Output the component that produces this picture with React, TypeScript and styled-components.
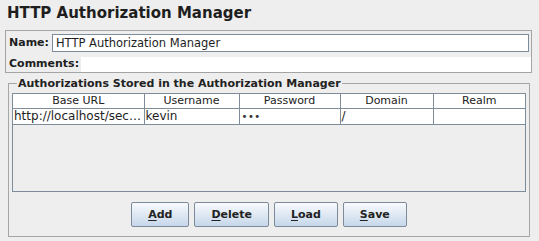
import React from 'react';
import styled, { createGlobalStyle } from 'styled-components';

const colors = {
  page: '#eeeeee',
  panelBorder: '#a4a4a4',
  fieldBorder: '#7c8c9b',
  grid: '#7f8d9b',
  text: '#1e1e1e',
  white: '#ffffff',
};

type Row = {
  url: string;
  user: string;
  password: string;
  domain: string;
  realm: string;
};

const rows: Row[] = [
  {
    url: 'http://localhost/sec…',
    user: 'kevin',
    password: '•••',
    domain: '/',
    realm: '',
  },
];

const columns = [
  { title: 'Base URL', width: 131 },
  { title: 'Username', width: 95 },
  { title: 'Password', width: 101 },
  { title: 'Domain', width: 93 },
  { title: 'Realm', width: 92 },
];

const buttons = ['Add', 'Delete', 'Load', 'Save'];

const GlobalStyle = createGlobalStyle`
  html, body {
    margin: 0;
    padding: 0;
    background: ${colors.page};
  }
  body {
    font-family: 'DejaVu Sans', 'Liberation Sans', sans-serif;
    color: ${colors.text};
  }
`;

export default function App() {
  return (
    <>
      <GlobalStyle />
      <Page>
        <Title>HTTP Authorization Manager</Title>
        <NamePanel>
          <NameRow>
            <Label>Name:</Label>
            <TextField defaultValue="HTTP Authorization Manager" />
          </NameRow>
          <CommentsRow>
            <Label>Comments:</Label>
            <CommentsArea />
          </CommentsRow>
        </NamePanel>
        <GroupBox>
          <Legend>Authorizations Stored in the Authorization Manager</Legend>
          <ScrollPane>
            <Table>
              <colgroup>
                {columns.map(c => (
                  <col key={c.title} style={{ width: c.width }} />
                ))}
              </colgroup>
              <thead>
                <tr>
                  {columns.map(c => (
                    <HeaderCell key={c.title}>{c.title}</HeaderCell>
                  ))}
                </tr>
              </thead>
              <tbody>
                {rows.map(r => (
                  <tr key={r.url}>
                    <Cell>{r.url}</Cell>
                    <Cell>{r.user}</Cell>
                    <Cell>
                      <Dots>{r.password}</Dots>
                    </Cell>
                    <Cell>{r.domain}</Cell>
                    <Cell>{r.realm}</Cell>
                  </tr>
                ))}
              </tbody>
            </Table>
          </ScrollPane>
          <ButtonBar>
            {buttons.map(b => (
              <Button key={b}>
                <u>{b[0]}</u>
                {b.slice(1)}
              </Button>
            ))}
          </ButtonBar>
        </GroupBox>
      </Page>
    </>
  );
}

const Page = styled.div`
  width: 539px;
  height: 241px;
  overflow: hidden;
`;

const Title = styled.h1`
  margin: 0;
  box-sizing: border-box;
  height: 30px;
  padding: 3px 7px 0;
  font-size: 15px;
  line-height: 20px;
  font-weight: 700;
`;

const NamePanel = styled.div`
  box-sizing: border-box;
  width: 527px;
  margin-left: 5px;
  border: 1px solid ${colors.panelBorder};
  display: flex;
  flex-direction: column;
`;

const NameRow = styled.div`
  display: flex;
  align-items: center;
  height: 21px;
  padding: 1px 2px 0 3px;
  gap: 3px;
`;

const Label = styled.span`
  font-size: 11px;
  font-weight: 700;
  line-height: 13px;
  white-space: nowrap;
`;

const TextField = styled.input`
  flex: 1;
  box-sizing: border-box;
  height: 18px;
  margin: 0;
  padding: 0 3px;
  border: 1px solid ${colors.fieldBorder};
  background: ${colors.white};
  font-family: 'DejaVu Sans', sans-serif;
  font-size: 11.5px;
  color: ${colors.text};
  outline: none;
`;

const CommentsRow = styled.div`
  display: flex;
  align-items: flex-end;
  height: 19px;
  padding-left: 3px;
  gap: 2px;

  & > span {
    align-self: center;
    padding-top: 2px;
  }
`;

const CommentsArea = styled.div`
  flex: 1;
  height: 15px;
  background: ${colors.white};
`;

const GroupBox = styled.fieldset`
  box-sizing: border-box;
  width: 522px;
  height: 160px;
  margin: 4px 0 0 8px;
  padding: 3px 3px 7px;
  border: 1px solid #a6a6a6;
  display: flex;
  flex-direction: column;
  min-width: 0;
`;

const Legend = styled.legend`
  margin-left: 5px;
  padding: 0 1px;
  font-size: 11px;
  font-weight: 700;
  line-height: 13px;
  color: #222;
`;

const ScrollPane = styled.div`
  box-sizing: border-box;
  height: 99px;
  border: 1px solid ${colors.grid};
  overflow: hidden;
`;

const Table = styled.table`
  border-collapse: collapse;
  table-layout: fixed;
  width: 512px;
`;

const HeaderCell = styled.th`
  height: 14px;
  padding: 0;
  background: ${colors.white};
  border-right: 1px solid ${colors.grid};
  border-bottom: 1px solid ${colors.grid};
  font-size: 11px;
  font-weight: 400;
  line-height: 14px;
  text-align: center;
  color: #222;

  &:last-child {
    border-right: none;
  }
`;

const Cell = styled.td`
  height: 15px;
  padding: 0 0 0 1px;
  background: ${colors.white};
  border-right: 1px solid ${colors.grid};
  border-bottom: 1px solid ${colors.grid};
  font-size: 12px;
  line-height: 15px;
  white-space: nowrap;
  overflow: hidden;

  &:last-child {
    border-right: none;
  }
`;

const Dots = styled.span`
  font-size: 10px;
  letter-spacing: 0.5px;
  padding-left: 1px;
  color: #333;
`;

const ButtonBar = styled.div`
  display: flex;
  justify-content: center;
  gap: 5px;
  margin-top: 10px;
`;

const Button = styled.button`
  box-sizing: border-box;
  height: 25px;
  padding: 0 16px;
  border: 1px solid #7c8a99;
  border-radius: 2px;
  background: linear-gradient(to bottom, #f8fafd 0%, #e2eaf4 45%, #c6d7ea 100%);
  font-family: 'DejaVu Sans', sans-serif;
  font-size: 11px;
  font-weight: 700;
  color: #222;

  u {
    text-underline-offset: 2px;
  }
`;
